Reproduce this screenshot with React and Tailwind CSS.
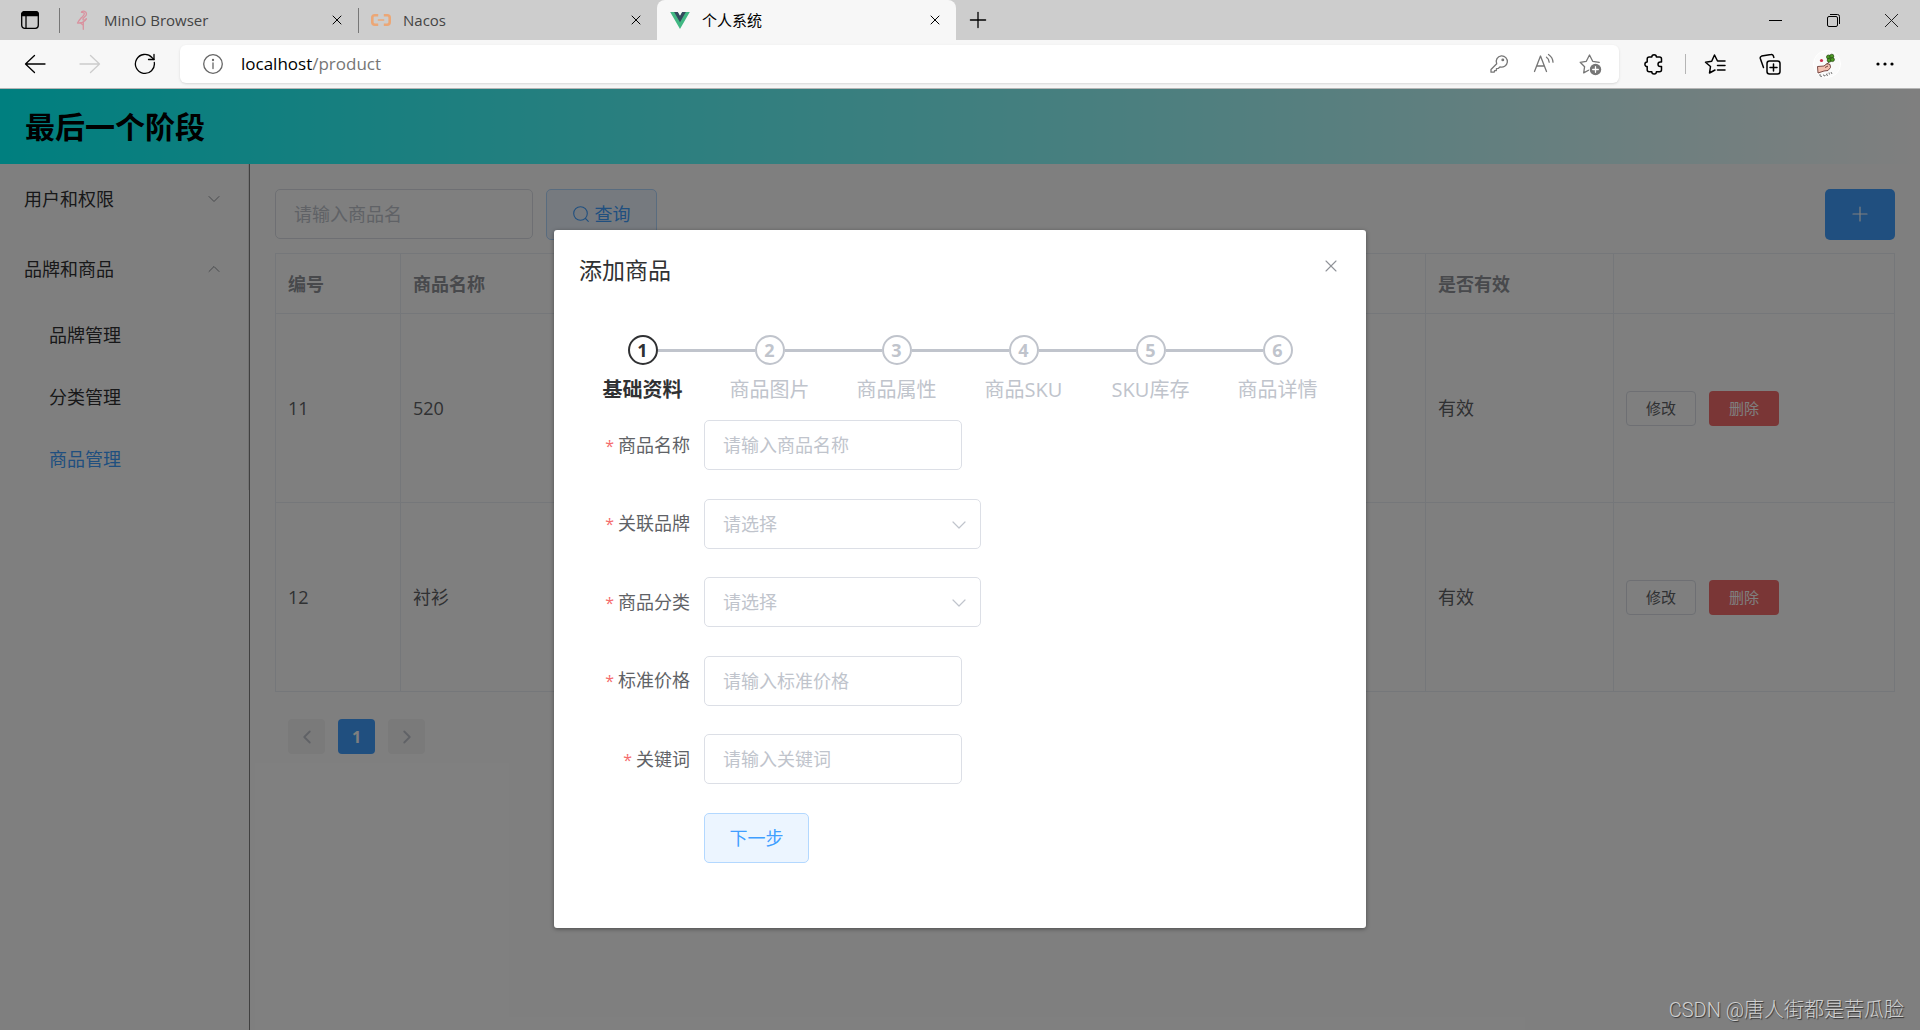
import React, {useState} from 'react';
import {ChevronDown, ChevronLeft, ChevronRight, ChevronUp, Plus, X} from 'lucide-react';

const FONT = 'font-["Open_Sans","Noto_Sans_CJK_SC",sans-serif]';

const menus = [
    {title: '用户和权限', open: false, items: []},
    {title: '品牌和商品', open: true, items: ['品牌管理', '分类管理', '商品管理']},
];

const products = [
    {id: 11, name: '520', status: '有效'},
    {id: 12, name: '衬衫', status: '有效'},
];

const steps = ['基础资料', '商品图片', '商品属性', '商品SKU', 'SKU库存', '商品详情'];

const fields = [
    {id: 'name', label: '商品名称', type: 'input', placeholder: '请输入商品名称'},
    {id: 'brand', label: '关联品牌', type: 'select', placeholder: '请选择'},
    {id: 'category', label: '商品分类', type: 'select', placeholder: '请选择'},
    {id: 'price', label: '标准价格', type: 'input', placeholder: '请输入标准价格'},
    {id: 'keyword', label: '关键词', type: 'input', placeholder: '请输入关键词'},
];

/* ---------- icons ---------- */

const Icon = ({children, size = 20, className = '', viewBox = '0 0 20 20'}) => (
    <svg
        width={size}
        height={size}
        viewBox={viewBox}
        fill="none"
        stroke="currentColor"
        strokeWidth="1.3"
        strokeLinecap="round"
        strokeLinejoin="round"
        className={`shrink-0 ${className}`}
    >
        {children}
    </svg>
);

const WorkspaceIcon = () => (
    <Icon>
        <rect x="1.7" y="1.7" width="16.6" height="16.6" rx="3"/>
        <path d="M1.7 5.6V4.5a2.8 2.8 0 0 1 2.8-2.8h11a2.8 2.8 0 0 1 2.8 2.8v1.1z" fill="currentColor"/>
        <path d="M6 6v12"/>
    </Icon>
);

const FlamingoIcon = () => (
    <Icon className="text-[#d9929f]">
        <path d="M9.500 2.200C11 .4 14.500 1.200 14.500 4c0 2.600-3.800 3.400-3.600 5.200.2 1.500 2.600 1.300 3.400-.4"/>
        <path d="M9.500 2.200l2.800.8c.6 2-1.300 3-3 4.800-1.300 1.500-2.600 3-3.800 5.200 3 .4 7.600-.8 8.800-4.200"/>
        <path d="M11.300 12v7.300M11 15l-3-2.400"/>
    </Icon>
);

const NacosIcon = () => (
    <svg width="20" height="12" viewBox="0 0 20 12" fill="none" stroke="#eca776" strokeWidth="2.6">
        <path d="M7.200 1.300H3.800C2 1.300 1.300 2.200 1.300 3.700v4.600c0 1.500.7 2.400 2.500 2.400h3.400"/>
        <path d="M12.800 1.300h3.400c1.800 0 2.500.9 2.500 2.400v4.600c0 1.500-.7 2.400-2.500 2.400h-3.400"/>
        <path d="M6.800 6h6.400" strokeWidth="1.5"/>
    </svg>
);

const VueIcon = () => (
    <svg width="20" height="17" viewBox="0 0 262 227">
        <path fill="#41b883" d="M161.096 0l-30.225 52.351L100.647 0H0l130.877 226.688L261.749 0z"/>
        <path fill="#34495e" d="M161.096 0l-30.225 52.351L100.647 0H52.346l78.526 136.010L209.398 0z"/>
    </svg>
);

const BackIcon = () => (
    <Icon size={22} viewBox="0 0 22 22"><path d="M21 11H1.500M10.500 2.500L1.500 11l9 8.500"/></Icon>
);

const ForwardIcon = () => (
    <Icon size={22} viewBox="0 0 22 22"><path d="M1 11h19.500M11.500 2.500l9 8.500-9 8.500"/></Icon>
);

const ReloadIcon = () => (
    <Icon size={22} viewBox="0 0 22 22">
        <path d="M20.300 9.500a9.500 9.500 0 1 1-2.400-5L20 6.500"/>
        <path d="M20 1.500v5h-5.500"/>
    </Icon>
);

const InfoIcon = () => (
    <Icon className="text-[#666]">
        <circle cx="10" cy="10" r="9.3"/>
        <path d="M10 9v5.500"/>
        <circle cx="10" cy="6" r=".5" fill="currentColor"/>
    </Icon>
);

const KeyIcon = () => (
    <Icon>
        <path d="M12.300 1.800a5.700 5.700 0 1 1-1.400 11.100l-1.700 1.500-1.700.2-.2 1.900-1.700.2-.5 1.500H2v-2.700l5.700-5.700a5.700 5.700 0 0 1 4.600-8z"/>
        <circle cx="13.8" cy="5.9" r=".8"/>
    </Icon>
);

const ReadAloudIcon = () => (
    <Icon size={22} viewBox="0 0 22 22">
        <path d="M1.500 18.500L7.500 3l6 15.500M3.700 13h7.700"/>
        <path d="M13.500 4.200c1.500 1 2.500 2.800 2.700 5M15.500 1.500c2.700 1.800 4.300 4.300 4.500 7.700"/>
    </Icon>
);

const StarAddIcon = () => (
    <Icon size={23} viewBox="0 0 23 23">
        <path d="M9.500 17.200l-4.800 2.700.9-6.200L1.200 9.300l6.100-1L10.500 2l3.200 6.300 6.500 1"/>
        <circle cx="16.5" cy="16.5" r="5.7" fill="currentColor" stroke="none"/>
        <path d="M16.500 13.700v5.600M13.700 16.500h5.600" stroke="#fff"/>
    </Icon>
);

const PuzzleIcon = () => (
    <Icon size={22} viewBox="0 0 22 22" className="stroke-[1.5]">
        <path d="M6.200 4h2.600a2.300 2.300 0 0 1 4.600 0h3.100a2 2 0 0 1 2 2v3h-1.200a2.300 2.300 0 0 0 0 4.600h1.200v3.200a2 2 0 0 1-2 2h-3.100a2.300 2.300 0 0 1-4.600 0H6.200a2 2 0 0 1-2-2v-3.200a2.300 2.300 0 0 1 0-4.600V6a2 2 0 0 1 2-2z"/>
    </Icon>
);

const FavoritesIcon = () => (
    <Icon size={22} viewBox="0 0 22 22" className="stroke-[1.5]">
        <path d="M11 17l-5.500 3 1-6.500L1.500 9.300l6.200-1L10.500 2l3 6H21M13.500 12.500H21M13.500 17H21"/>
    </Icon>
);

const CollectionsIcon = () => (
    <Icon size={22} viewBox="0 0 22 22" className="stroke-[1.5]">
        <rect x="8" y="8" width="13" height="13" rx="2.5"/>
        <path d="M14.500 11v7M11 14.500h7M4.500 14.500L1.300 5.500a2 2 0 0 1 1.300-2.400l9.400-1.600a2 2 0 0 1 2.300 1.300l.5 1.600"/>
    </Icon>
);

const AvatarIcon = () => (
    <svg width="28" height="28" viewBox="0 0 28 28">
        <circle cx="14" cy="14" r="13.5" fill="#fafafa" stroke="#fff"/>
        <path d="M4.500 16.500l6.500-.500 3-2.500 3 1 .5 3-2.500 3-4 .5-6 2z" fill="#f3c0b0" stroke="#6b3a35" strokeWidth=".9"/>
        <path d="M12 17.500l3-1.500M14 14.500l3.500-5" stroke="#6b3a35" strokeWidth=".9"/>
        <g fill="#4c9a25" stroke="#24480f" strokeWidth=".7">
            <circle cx="15.5" cy="7" r="2"/>
            <circle cx="18.8" cy="6.2" r="2"/>
            <circle cx="16.2" cy="10.2" r="2"/>
            <circle cx="19.4" cy="9.6" r="2"/>
        </g>
        <circle cx="8.500" cy="10.500" r="1.600" fill="#cf2f4b"/>
        <path d="M7 24v2l2 .5M10.500 24.500l.5 1.500 1.500-.5M14 23.500l-.5 1.500 1.500.5M16 22.500l.5 2M18 22l1 2" stroke="#555" strokeWidth=".8" fill="none"/>
    </svg>
);

const SearchIcon = () => (
    <Icon size={16} viewBox="0 0 16 16" className="stroke-[1.1]">
        <circle cx="7.5" cy="7.5" r="6.8"/>
        <path d="M12.500 12.500l2.800 2.800"/>
    </Icon>
);

const IconButton = ({label, className = '', children}) => (
    <button type="button" aria-label={label} className={`flex items-center justify-center ${className}`}>
        {children}
    </button>
);

/* ---------- browser frame ---------- */

const Tab = ({icon, title, active}) => (
    <div
        className={`flex h-full items-center pr-[13px] ${
            active ? 'w-[299px] rounded-t-lg bg-[#f7f7f7] pl-[12px] text-black' : 'w-[298px] pl-[11px] text-[#444]'
        }`}
    >
        <span className="flex w-[22px] justify-center">{icon}</span>
        <span className="ml-[11px] flex-1 text-[15px] leading-5">{title}</span>
        <IconButton label="关闭标签页" className="h-4 w-4 text-black">
            <X size={16} strokeWidth={1.5}/>
        </IconButton>
    </div>
);

const TabBar = () => (
    <div className="flex h-10 items-center bg-[#cdcdcd]">
        <IconButton label="工作区" className="w-[59px]"><WorkspaceIcon/></IconButton>
        <div className="h-[25px] w-px bg-[#777]"/>
        <Tab icon={<FlamingoIcon/>} title="MinIO Browser"/>
        <div className="h-[25px] w-px bg-[#777]"/>
        <Tab icon={<NacosIcon/>} title="Nacos"/>
        <Tab icon={<VueIcon/>} title="个人系统" active/>
        <IconButton label="新建标签页" className="ml-2 h-7 w-7">
            <Plus size={26} strokeWidth={1.2}/>
        </IconButton>
        <div className="ml-auto flex">
            <IconButton label="最小化" className="h-10 w-[58px]">
                <svg width="13" height="13" stroke="#000"><path d="M0 6.500h13"/></svg>
            </IconButton>
            <IconButton label="还原" className="h-10 w-[58px]">
                <svg width="13" height="13" fill="none" stroke="#000">
                    <rect x=".5" y="2.5" width="10" height="10" rx="1.5"/>
                    <path d="M3 .5h7.500a2 2 0 0 1 2 2V10"/>
                </svg>
            </IconButton>
            <IconButton label="关闭" className="h-10 w-[58px]">
                <svg width="13" height="13" stroke="#222"><path d="M0 0l13 13M13 0L0 13"/></svg>
            </IconButton>
        </div>
    </div>
);

const Toolbar = () => (
    <div className="flex h-[49px] items-center border-b border-[#b5b5b5] bg-[#f7f7f7] pl-6">
        <IconButton label="后退"><BackIcon/></IconButton>
        <IconButton label="前进" className="ml-[33px] text-[#ccc]"><ForwardIcon/></IconButton>
        <IconButton label="刷新" className="ml-[33px]"><ReloadIcon/></IconButton>
        <div className="ml-6 flex h-[38px] flex-1 items-center rounded-md bg-white pr-[17px] pl-[23px] shadow-sm">
            <InfoIcon/>
            <div className="ml-[18px] flex-1 text-[17px] leading-6">
                localhost<span className="text-[#767676]">/product</span>
            </div>
            <div className="flex items-center gap-6 text-[#767676]">
                <IconButton label="密码"><KeyIcon/></IconButton>
                <IconButton label="大声朗读"><ReadAloudIcon/></IconButton>
                <IconButton label="收藏"><StarAddIcon/></IconButton>
            </div>
        </div>
        <IconButton label="扩展" className="ml-6"><PuzzleIcon/></IconButton>
        <div className="ml-5 h-5 w-px bg-[#b5b5b5]"/>
        <IconButton label="收藏夹" className="ml-[18px]"><FavoritesIcon/></IconButton>
        <IconButton label="集锦" className="ml-[33px]"><CollectionsIcon/></IconButton>
        <IconButton label="个人资料" className="ml-8"><AvatarIcon/></IconButton>
        <IconButton label="更多" className="mr-6 ml-[33px]">
            <svg width="22" height="6">
                <circle cx="4" cy="3" r="1.6"/>
                <circle cx="11" cy="3" r="1.6"/>
                <circle cx="18" cy="3" r="1.6"/>
            </svg>
        </IconButton>
    </div>
);

/* ---------- page ---------- */

const Sidebar = () => (
    <aside className="w-[250px] shrink-0 border-r border-[#808080]">
        <nav className="border-r border-[#e6e6e6] text-[#303133]">
            {menus.map((menu) => (
                <div key={menu.title}>
                    <button type="button" className="flex h-[70px] w-full items-center justify-between px-6">
                        <span>{menu.title}</span>
                        {menu.open ? (
                            <ChevronUp size={20} strokeWidth={1.2} className="text-[#909399]"/>
                        ) : (
                            <ChevronDown size={20} strokeWidth={1.2} className="text-[#909399]"/>
                        )}
                    </button>
                    {menu.items.map((item) => (
                        <a
                            key={item}
                            href="#"
                            className={`flex h-[62px] items-center pl-[49px] ${item === '商品管理' ? 'text-[#409eff]' : ''}`}
                        >
                            {item}
                        </a>
                    ))}
                </div>
            ))}
        </nav>
    </aside>
);

const ProductTable = () => (
    <table className="mt-[13px] w-full table-fixed border-collapse text-left text-[#606266] [&_td]:border [&_td]:border-[#ebeef5] [&_td]:px-3 [&_th]:border [&_th]:border-[#ebeef5] [&_th]:px-3">
        <colgroup>
            <col className="w-[125px]"/>
            <col className="w-[188px]"/>
            <col/>
            <col className="w-[188px]"/>
            <col className="w-[281px]"/>
        </colgroup>
        <thead>
        <tr className="h-[60px] text-[#909399]">
            <th>编号</th>
            <th>商品名称</th>
            <th/>
            <th>是否有效</th>
            <th/>
        </tr>
        </thead>
        <tbody>
        {products.map((p) => (
            <tr key={p.id} className="h-[189px]">
                <td>{p.id}</td>
                <td>{p.name}</td>
                <td/>
                <td>{p.status}</td>
                <td>
                    <div className="flex gap-[13px] text-[15px]">
                        <button type="button" className="h-[35px] w-[70px] rounded border border-[#dcdfe6] bg-white">
                            修改
                        </button>
                        <button type="button" className="h-[35px] w-[70px] rounded bg-[#f56c6c] text-white">
                            删除
                        </button>
                    </div>
                </td>
            </tr>
        ))}
        </tbody>
    </table>
);

const Pagination = () => (
    <div className="mt-[27px] ml-[13px] flex gap-[13px]">
        <IconButton label="上一页" className="h-[35px] w-[37px] rounded-sm bg-[#f4f4f5] text-[#c0c4cc]">
            <ChevronLeft size={22}/>
        </IconButton>
        <button type="button" className="h-[35px] w-[37px] rounded-sm bg-[#409eff] text-base font-bold text-white">
            1
        </button>
        <IconButton label="下一页" className="h-[35px] w-[37px] rounded-sm bg-[#f4f4f5] text-[#c0c4cc]">
            <ChevronRight size={22}/>
        </IconButton>
    </div>
);

const Field = ({field, value, onChange}) => (
    <div className="flex items-center">
        <label htmlFor={field.id} className="w-[125px] pr-[14px] text-right">
            <span className="mr-1 text-base text-[#f56c6c]">*</span>
            {field.label}
        </label>
        {field.type === 'input' ? (
            <input
                id={field.id}
                value={value}
                placeholder={field.placeholder}
                onChange={(e) => onChange(e.target.value)}
                className="h-[50px] w-[258px] rounded-[5px] border border-[#dcdfe6] px-[18px] placeholder:text-[#c0c4cc]"
            />
        ) : (
            <div className="relative w-[277px]">
                <select
                    id={field.id}
                    value={value}
                    onChange={(e) => onChange(e.target.value)}
                    className="h-[50px] w-full appearance-none rounded-[5px] border border-[#dcdfe6] bg-white px-[18px] text-[#c0c4cc]"
                >
                    <option value="">{field.placeholder}</option>
                </select>
                <ChevronDown
                    size={24}
                    strokeWidth={1.2}
                    className="pointer-events-none absolute top-[14px] right-[10px] text-[#c0c4cc]"
                />
            </div>
        )}
    </div>
);

const ProductDialog = () => {
    const [form, setForm] = useState({name: '', brand: '', category: '', price: '', keyword: ''});

    return (
        <div
            role="dialog"
            aria-label="添加商品"
            className="w-[812px] rounded-[3px] bg-white px-[25px] pb-[65px] text-[#606266] shadow-[0_1px_4px_rgba(0,0,0,0.4)]"
        >
            <div className="flex items-start justify-between pt-6">
                <h2 className="text-[23px] leading-8 text-[#303133]">添加商品</h2>
                <IconButton label="关闭" className="h-6 w-5 text-[#909399]">
                    <X size={24} strokeWidth={1.3}/>
                </IconButton>
            </div>

            {/* Steps */}
            <ol className="mt-[49px] grid grid-cols-6">
                {steps.map((step, i) => (
                    <li
                        key={step}
                        className={`flex flex-col items-center ${i === 0 ? 'font-bold text-[#303133]' : 'text-[#c0c4cc]'}`}
                    >
                        <div className="flex w-full items-center">
                            <div className={`h-[3px] flex-1 ${i === 0 ? '' : 'bg-[#c0c4cc]'}`}/>
                            <div className="flex h-[30px] w-[30px] items-center justify-center rounded-full border-2 border-current text-lg leading-none font-bold">
                                {i + 1}
                            </div>
                            <div className={`h-[3px] flex-1 ${i === steps.length - 1 ? '' : 'bg-[#c0c4cc]'}`}/>
                        </div>
                        <div className="mt-[10px] text-xl leading-[30px]">{step}</div>
                    </li>
                ))}
            </ol>

            {/* Form */}
            <form className="mt-[15px] flex min-h-[443px] flex-col justify-between">
                {fields.map((field) => (
                    <Field
                        key={field.id}
                        field={field}
                        value={form[field.id]}
                        onChange={(value) => setForm({...form, [field.id]: value})}
                    />
                ))}
                <button
                    type="button"
                    className="ml-[125px] h-[50px] w-[105px] rounded-[5px] border border-[#b3d8ff] bg-[#ecf5ff] text-[#409eff]"
                >
                    下一步
                </button>
            </form>
        </div>
    );
};

export default function App() {
    return (
        <div className={`flex min-h-screen flex-col bg-white text-black ${FONT}`}>
            <TabBar/>
            <Toolbar/>
            <div className="relative flex flex-1 flex-col text-[18px] leading-6">
                <header className="flex h-[75px] items-center bg-[linear-gradient(to_right,#00ffff,#ffffff)] pl-[25px]">
                    <h1 className="text-3xl font-bold">最后一个阶段</h1>
                </header>
                <div className="flex flex-1">
                    <Sidebar/>
                    <main className="flex-1 p-[25px]">
                        <div className="flex gap-[13px]">
                            <input
                                aria-label="商品名"
                                placeholder="请输入商品名"
                                className="h-[50px] w-[258px] rounded-[5px] border border-[#dcdfe6] px-[18px] placeholder:text-[#c0c4cc]"
                            />
                            <button
                                type="button"
                                className="flex h-[51px] w-[111px] items-center justify-center gap-[6px] rounded-[5px] border border-[#b3d8ff] bg-[#ecf5ff] pb-[2px] text-[#409eff]"
                            >
                                <SearchIcon/>
                                查询
                            </button>
                            <IconButton label="添加商品" className="ml-auto h-[51px] w-[70px] rounded-[5px] bg-[#409eff] pb-[2px] text-white">
                                <Plus size={24} strokeWidth={1.2}/>
                            </IconButton>
                        </div>
                        <ProductTable/>
                        <Pagination/>
                    </main>
                </div>

                {/* Mask and dialog */}
                <div className="absolute inset-0 flex items-start justify-center bg-black/50 pt-[141px]">
                    <ProductDialog/>
                </div>
                <div className="absolute right-4 bottom-[6px] font-['Liberation_Sans_Narrow','Roboto','Noto_Sans_CJK_SC',sans-serif] text-xl font-light text-[#d0d0d0] [text-shadow:1px_1px_1px_rgba(0,0,0,0.6)]">
                    CSDN @唐人街都是苦瓜脸
                </div>
            </div>
        </div>
    );
}
